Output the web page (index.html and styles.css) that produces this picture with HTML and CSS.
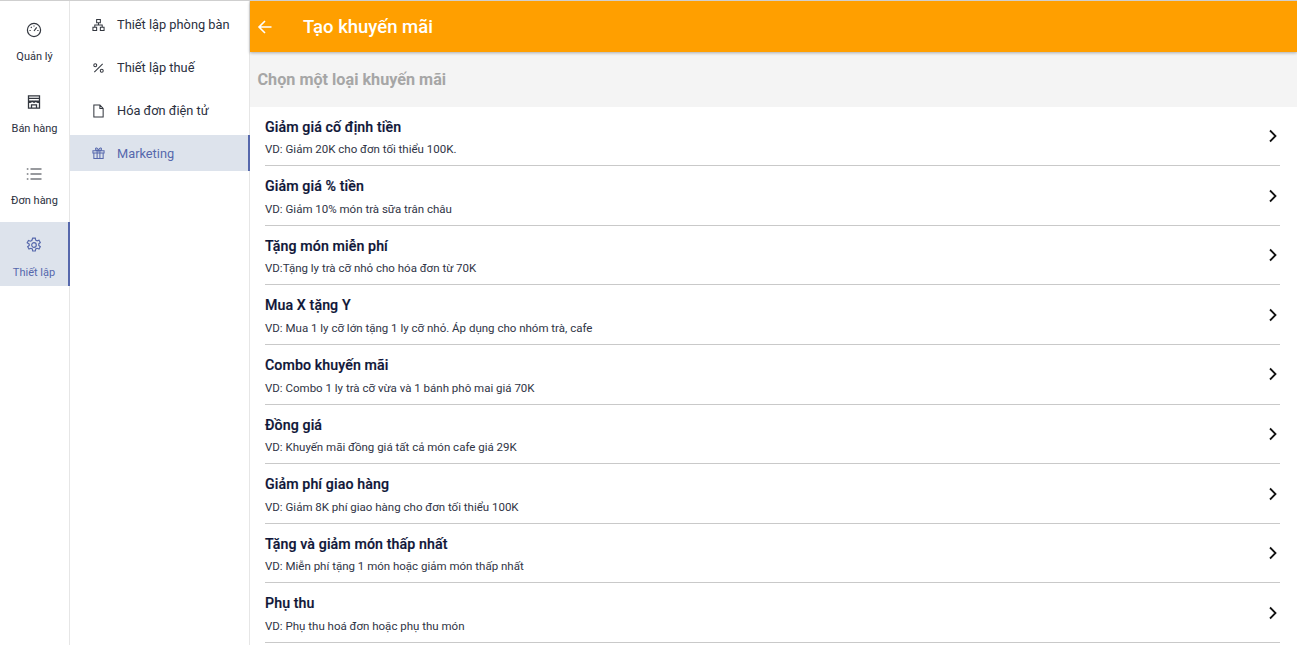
FILE: index.html
```html
<!DOCTYPE html>
<html lang="vi">
<head>
<meta charset="utf-8">
<title>Tạo khuyến mãi</title>
<link rel="stylesheet" href="styles.css">
</head>
<body>
<div class="app">
  <nav class="rail">
    <a class="rail-item">
      <svg class="ic" viewBox="0 0 16 16"><circle cx="8" cy="8" r="6.600"/><path d="M8 9l2.700-3.600M3.500 8.500h1.200M11.300 8.500h1.200M4.900 5l.8.800M8 3.400v1.200"/></svg>
      <span>Quản lý</span>
    </a>
    <a class="rail-item">
      <svg class="ic store" viewBox="0 0 16 16"><path d="M2.500 1.800h11v12.400h-11zM2.500 4.300h11M2.500 7.200h11M2.500 7.200c1 1.400 2.500 1.400 3.700 0 1.200 1.400 2.500 1.400 3.600 0 1.200 1.400 2.700 1.400 3.700 0M5.500 14.200v-3.400h5v3.400"/></svg>
      <span>Bán hàng</span>
    </a>
    <a class="rail-item">
      <svg class="ic" viewBox="0 0 16 16"><path d="M4.500 3h11M4.500 8h11M4.500 13h11"/><path class="dots" d="M.8 3h1.600M.8 8h1.600M.8 13h1.600"/></svg>
      <span>Đơn hàng</span>
    </a>
    <a class="rail-item active">
      <svg class="ic" viewBox="0 0 16 16"><circle cx="8" cy="8" r="2.300"/><path d="M6.700 1.200h2.600l.4 2 1.400.7 1.900-.7 1.300 2.300-1.500 1.300v1.600l1.500 1.300-1.300 2.300-1.900-.7-1.400.7-.4 2H6.700l-.4-2-1.400-.7-1.900.7-1.300-2.300 1.500-1.300V7.100L1.200 5.800l1.300-2.300 1.900.7 1.400-.7z"/></svg>
      <span>Thiết lập</span>
    </a>
  </nav>
  <nav class="subnav">
    <a class="sub-item">
      <svg class="ic-s" viewBox="0 0 14 14"><path d="M5 1h4v3.500H5zM1 9.500h4V13H1zM9 9.500h4V13H9zM7 4.500V7M3 9.500V7h8v2.500"/></svg>
      <span>Thiết lập phòng bàn</span>
    </a>
    <a class="sub-item">
      <svg class="ic-s" viewBox="0 0 14 14"><path d="M11.500 2.500L2.500 11.500"/><circle cx="3.500" cy="4" r="1.600"/><circle cx="10.500" cy="10" r="1.600"/></svg>
      <span>Thiết lập thuế</span>
    </a>
    <a class="sub-item">
      <svg class="ic-s" viewBox="0 0 14 14"><path d="M2 .6h6.500L12 4.200v9.200H2zM8.500.6v3.600H12"/></svg>
      <span>Hóa đơn điện tử</span>
    </a>
    <a class="sub-item active">
      <svg class="ic-s" viewBox="0 0 14 14"><path d="M1 4.500h12V7H1zM2 7v6h10V7M5.500 4.500V13M8.500 4.500V13M7 4.500C5.500 4.500 3.800 3.800 3.800 2.600 3.800 1 6 1 7 4.500 8 1 10.200 1 10.200 2.600 10.200 3.800 8.500 4.500 7 4.500z"/></svg>
      <span>Marketing</span>
    </a>
  </nav>
  <main class="main">
    <header class="topbar">
      <svg class="back" viewBox="0 0 16 16"><path d="M14.500 8H2M8 2L2 8l6 6"/></svg>
      <h1>Tạo khuyến mãi</h1>
    </header>
    <div class="section-title">Chọn một loại khuyến mãi</div>
    <ul class="list">
      <li class="row"><div class="row-text"><strong>Giảm giá cố định tiền</strong><small>VD: Giảm 20K cho đơn tối thiểu 100K.</small></div><svg class="chev" viewBox="0 0 10 14"><path d="M2 1.500L7.500 7 2 12.500"/></svg></li>
      <li class="row"><div class="row-text"><strong>Giảm giá % tiền</strong><small>VD: Giảm 10% món trà sữa trân châu</small></div><svg class="chev" viewBox="0 0 10 14"><path d="M2 1.500L7.500 7 2 12.500"/></svg></li>
      <li class="row"><div class="row-text"><strong>Tặng món miễn phí</strong><small>VD:Tặng ly trà cỡ nhỏ cho hóa đơn từ 70K</small></div><svg class="chev" viewBox="0 0 10 14"><path d="M2 1.500L7.500 7 2 12.500"/></svg></li>
      <li class="row"><div class="row-text"><strong>Mua X tặng Y</strong><small>VD: Mua 1 ly cỡ lớn tặng 1 ly cỡ nhỏ. Áp dụng cho nhóm trà, cafe</small></div><svg class="chev" viewBox="0 0 10 14"><path d="M2 1.500L7.500 7 2 12.500"/></svg></li>
      <li class="row"><div class="row-text"><strong>Combo khuyến mãi</strong><small>VD: Combo 1 ly trà cỡ vừa và 1 bánh phô mai giá 70K</small></div><svg class="chev" viewBox="0 0 10 14"><path d="M2 1.500L7.500 7 2 12.500"/></svg></li>
      <li class="row"><div class="row-text"><strong>Đồng giá</strong><small>VD: Khuyến mãi đồng giá tất cả món cafe giá 29K</small></div><svg class="chev" viewBox="0 0 10 14"><path d="M2 1.500L7.500 7 2 12.500"/></svg></li>
      <li class="row"><div class="row-text"><strong>Giảm phí giao hàng</strong><small>VD: Giảm 8K phí giao hàng cho đơn tối thiểu 100K</small></div><svg class="chev" viewBox="0 0 10 14"><path d="M2 1.500L7.500 7 2 12.500"/></svg></li>
      <li class="row"><div class="row-text"><strong>Tặng và giảm món thấp nhất</strong><small>VD: Miễn phí tặng 1 món hoặc giảm món thấp nhất</small></div><svg class="chev" viewBox="0 0 10 14"><path d="M2 1.500L7.500 7 2 12.500"/></svg></li>
      <li class="row"><div class="row-text"><strong>Phụ thu</strong><small>VD: Phụ thu hoá đơn hoặc phụ thu món</small></div><svg class="chev" viewBox="0 0 10 14"><path d="M2 1.500L7.500 7 2 12.500"/></svg></li>
    </ul>
  </main>
</div>
</body>
</html>
```

FILE: styles.css
```css
* { box-sizing: border-box; }
html, body { margin: 0; height: 100%; overflow: hidden; background: #fff; }
body { font-family: Roboto, "Noto Sans", sans-serif; color: #1a2038; border-top: 1px solid #cfcfcf; }
.app { display: flex; height: 644px; }
.rail { width: 70px; flex: none; border-right: 1px solid #e6e6e6; padding-top: 5px; }
.rail-item { display: flex; flex-direction: column; align-items: center; height: 72px; padding-top: 16px; font-size: 11px; color: #2b3040; }
.rail-item span { margin-top: 12px; line-height: 14px; }
.rail-item .ic { width: 16px; height: 16px; fill: none; stroke: #33373f; stroke-width: 1.200; margin-left: -1px; }
.rail-item .store { stroke-width: 1.300; }
.rail-item.active { background: #dde3ec; color: #5668ac; margin-right: -1px; border-right: 2px solid #5668ac; height: 64px; padding-top: 15px; }
.rail-item.active span { margin-top: 13px; }
.rail-item.active .ic { stroke: #5668ac; }
.subnav { width: 180px; flex: none; border-right: 1px solid #e6e6e6; padding-top: 2px; }
.sub-item { display: flex; align-items: center; height: 43px; padding-left: 22px; font-size: 12.800px; color: #2b3040; }
.sub-item span { margin-left: 12px; }
.sub-item .ic-s { width: 13px; height: 14px; fill: none; stroke: #33373f; stroke-width: 1.100; }
.sub-item.active { height: 36px; background: #dde3ec; color: #5668ac; border-right: 2px solid #5668ac; margin-right: -1px; margin-top: 3px; }
.sub-item.active .ic-s { stroke: #5668ac; }
.main { flex: 1; min-width: 0; display: flex; flex-direction: column; }
.topbar { height: 51px; flex: none; background: #ff9f00; display: flex; align-items: center; padding-left: 7px; box-shadow: 0 1px 3px rgba(0,0,0,.3); position: relative; color: #fff; }
.topbar h1 { margin: 0 0 0 30px; font-size: 18.500px; font-weight: 500; line-height: 24px; }
.back { width: 16px; height: 16px; fill: none; stroke: #fff; stroke-width: 1.600; }
.section-title { height: 54.700px; flex: none; background: #f4f4f4; padding: 18px 0 0 7.500px; font-size: 16.200px; line-height: 20px; font-weight: 700; color: #a6a6a6; }
.list { list-style: none; margin: 0; padding: 0 17px 0 15px; }
.row { height: 59.600px; display: flex; align-items: center; justify-content: space-between; border-bottom: 1px solid #c9c9c9; }
.row-text { display: flex; flex-direction: column; padding-top: 1.800px; }
.row-text strong { font-size: 14.200px; line-height: 18px; font-weight: 500; letter-spacing: .1px; color: #0f1638; -webkit-text-stroke: .2px #0f1638; }
.row-text small { font-size: 11.500px; line-height: 14px; margin-top: 6.500px; color: #2f3445; }
.chev { width: 10px; height: 14px; margin-right: 2px; fill: none; stroke: #111; stroke-width: 1.800; }
```
